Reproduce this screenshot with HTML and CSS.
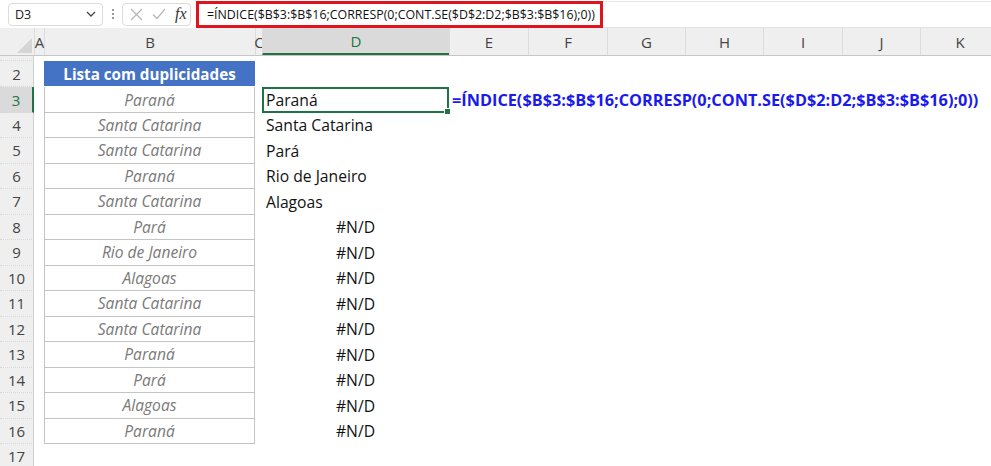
FILE: index.html
```html
<!DOCTYPE html>
<html lang="pt">
<head>
    <meta charset="UTF-8">
    <title>Lista sem duplicidades</title>
    <link rel="stylesheet" href="styles.css">
</head>
<body>
    <div class="topbar">
        <div class="namebox">
            <span>D3</span>
            <svg class="chev" width="10" height="6" viewBox="0 0 10 6"><path d="M1 1l4 4 4-4" fill="none" stroke="#444" stroke-width="1.3"/></svg>
        </div>
        <div class="grip">
            <span></span><span></span><span></span>
        </div>
        <div class="fnbox">
            <svg width="13" height="13" viewBox="0 0 13 13"><path d="M1 1l11 11M12 1L1 12" stroke="#b5b5b5" stroke-width="1.2"/></svg>
            <svg width="14" height="12" viewBox="0 0 14 12"><path d="M1 6.5l4 4L13 1" fill="none" stroke="#b5b5b5" stroke-width="1.2"/></svg>
            <span class="fx">fx</span>
        </div>
        <div class="fbar">
            <div class="ftext">=ÍNDICE($B$3:$B$16;CORRESP(0;CONT.SE($D$2:D2;$B$3:$B$16);0))</div>
        </div>
    </div>

    <div class="sheet">
        <div class="row colhead">
            <div class="corner"><span class="tri"></span></div>
            <div class="ch">A</div>
            <div class="ch">B</div>
            <div class="ch">C</div>
            <div class="ch sel">D</div>
            <div class="ch">E</div>
            <div class="ch">F</div>
            <div class="ch">G</div>
            <div class="ch">H</div>
            <div class="ch">I</div>
            <div class="ch">J</div>
            <div class="ch">K</div>
        </div>
        <div class="row hidden"><div class="rh"></div></div>

        <div class="row first"><div class="rh">2</div><div class="b thead">Lista com duplicidades</div></div>
        <div class="row"><div class="rh sel">3</div><div class="b">Paraná</div><div class="d active">Paraná<span class="handle"></span></div><div class="e">=ÍNDICE($B$3:$B$16;CORRESP(0;CONT.SE($D$2:D2;$B$3:$B$16);0))</div></div>
        <div class="row"><div class="rh">4</div><div class="b">Santa Catarina</div><div class="d">Santa Catarina</div></div>
        <div class="row"><div class="rh">5</div><div class="b">Santa Catarina</div><div class="d">Pará</div></div>
        <div class="row"><div class="rh">6</div><div class="b">Paraná</div><div class="d">Rio de Janeiro</div></div>
        <div class="row"><div class="rh">7</div><div class="b">Santa Catarina</div><div class="d">Alagoas</div></div>
        <div class="row"><div class="rh">8</div><div class="b">Pará</div><div class="d err">#N/D</div></div>
        <div class="row"><div class="rh">9</div><div class="b">Rio de Janeiro</div><div class="d err">#N/D</div></div>
        <div class="row"><div class="rh">10</div><div class="b">Alagoas</div><div class="d err">#N/D</div></div>
        <div class="row"><div class="rh">11</div><div class="b">Santa Catarina</div><div class="d err">#N/D</div></div>
        <div class="row"><div class="rh">12</div><div class="b">Santa Catarina</div><div class="d err">#N/D</div></div>
        <div class="row"><div class="rh">13</div><div class="b">Paraná</div><div class="d err">#N/D</div></div>
        <div class="row"><div class="rh">14</div><div class="b">Pará</div><div class="d err">#N/D</div></div>
        <div class="row"><div class="rh">15</div><div class="b">Alagoas</div><div class="d err">#N/D</div></div>
        <div class="row"><div class="rh">16</div><div class="b">Paraná</div><div class="d err">#N/D</div></div>
        <div class="row"><div class="rh">17</div></div>
    </div>
</body>
</html>
```

FILE: styles.css
```css
body {
    margin: 0;
    width: 991px;
    height: 466px;
    overflow: hidden;
    background-color: #fff;
    font-family: "Open Sans", "Noto Sans", sans-serif;
    color: #222;
}

/* formula bar */
.topbar {
    display: flex;
    align-items: center;
    height: 28px;
    padding-left: 8px;
    box-sizing: border-box;
}

.namebox {
    display: flex;
    align-items: center;
    justify-content: space-between;
    width: 95px;
    height: 23px;
    box-sizing: border-box;
    border: 1px solid #dcdcdc;
    border-radius: 4px;
    padding: 0 6px 0 6px;
    font-size: 12.5px;
}

.grip {
    display: flex;
    flex-direction: column;
    gap: 2px;
    margin: 0 8px 0 9px;
}

.grip span {
    width: 2px;
    height: 2px;
    background-color: #9a9a9a;
}

.fnbox {
    display: flex;
    align-items: center;
    gap: 9px;
    width: 69px;
    height: 23px;
    box-sizing: border-box;
    border: 1px solid #dcdcdc;
    border-radius: 4px;
    padding-left: 7px;
}

.fx {
    font-family: "Liberation Serif", serif;
    font-style: italic;
    font-size: 16px;
    color: #333;
}

.fbar {
    flex: 1;
    height: 27px;
    margin-left: 6px;
    border-top: 1px solid #e3e3e3;
    border-bottom: 1px solid #e3e3e3;
    box-sizing: border-box;
    position: relative;
}

.ftext {
    position: absolute;
    left: -1px;
    top: -1px;
    width: 407px;
    height: 27px;
    box-sizing: border-box;
    border: 3px solid #e0141e;
    padding-left: 8px;
    font-size: 12.4px;
    line-height: 21px;
    color: #111;
    white-space: nowrap;
}

/* grid */
.row {
    display: grid;
    grid-template-columns: 34px 10px 211px 7px 187px 79px 79px 78px 78px 79px 78px 79px;
    height: 25.5px;
}

.colhead {
    height: 28px;
    background-color: #efefef;
    border-bottom: 1px solid #c6c6c6;
    box-sizing: border-box;
}

.corner {
    position: relative;
}

.corner .tri {
    position: absolute;
    right: 2px;
    bottom: 2px;
    width: 0;
    height: 0;
    border-left: 15px solid transparent;
    border-bottom: 15px solid #d5d5d5;
}

.ch {
    display: flex;
    align-items: center;
    justify-content: center;
    font-size: 15px;
    color: #444;
    border-left: 1px solid #dcdcdc;
}

.ch.sel {
    background-color: #dadada;
    color: #217346;
    border-bottom: 2px solid #217346;
}

.hidden {
    height: 5px;
}

.first {
    height: 26px;
}

.rh {
    grid-column: 1;
    display: flex;
    align-items: center;
    justify-content: center;
    background-color: #efefef;
    border-right: 1px solid #cfcfcf;
    border-bottom: 1px dotted #d8d8d8;
    font-size: 15px;
    color: #444;
}

.rh.sel {
    background-color: #dadada;
    color: #217346;
    border-right: 2px solid #217346;
}

.b {
    grid-column: 3;
    display: flex;
    align-items: center;
    justify-content: center;
    border: 1px solid #c4c4c4;
    border-top: none;
    font-size: 15.6px;
    font-style: italic;
    color: #7a7a7a;
}

.b.thead {
    background-color: #4472c4;
    border: none;
    margin-bottom: 1px;
    font-size: 15.2px;
    color: #fff;
    font-style: normal;
    font-weight: bold;
}

.d {
    grid-column: 5;
    display: flex;
    align-items: center;
    padding-left: 4px;
    font-size: 15.7px;
    color: #111;
}

.d.err {
    justify-content: center;
    padding-left: 0;
}

.d.active {
    position: relative;
    border: 2px solid #217346;
    padding-left: 2px;
}

.handle {
    position: absolute;
    right: -4px;
    bottom: -4px;
    width: 5px;
    height: 5px;
    background-color: #217346;
    border: 1px solid #fff;
}

.e {
    grid-column: 6 / -1;
    display: flex;
    align-items: center;
    padding-left: 3px;
    white-space: nowrap;
    font-size: 16.3px;
    font-weight: bold;
    color: #1a1aee;
}
```
